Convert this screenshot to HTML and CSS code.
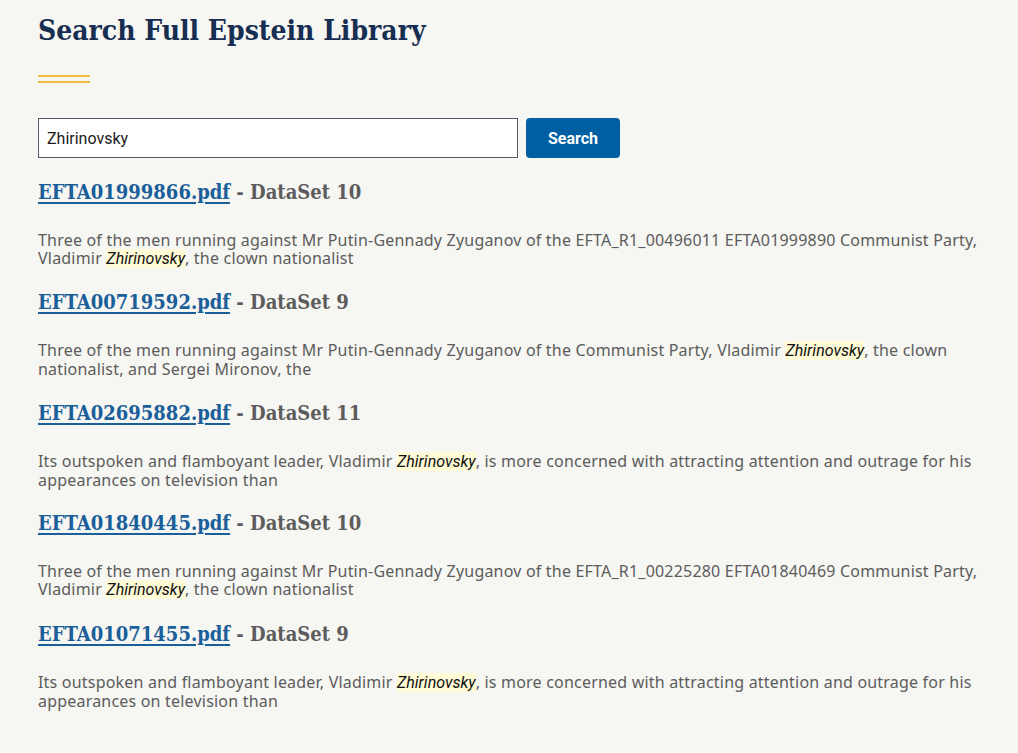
FILE: index.html
```html
<!DOCTYPE html>
<html>
<head>
<meta charset="utf-8">
<link rel="stylesheet" href="styles.css">
</head>
<body>
<main class="page">
  <h1 class="title">Search Full Epstein Library</h1>
  <div class="rule"></div>
  <form class="search">
    <input class="search-input" type="text" value="Zhirinovsky">
    <button class="search-btn" type="button">Search</button>
  </form>
  <div class="results">
    <div class="result">
      <h2 class="result-title"><a href="#">EFTA01999866.pdf</a> - DataSet 10</h2>
      <p class="snippet">Three of the men running against Mr Putin-Gennady Zyuganov of the EFTA_R1_00496011 EFTA01999890 Communist Party, Vladimir <mark>Zhirinovsky</mark>, the clown nationalist</p>
    </div>
    <div class="result">
      <h2 class="result-title"><a href="#">EFTA00719592.pdf</a> - DataSet 9</h2>
      <p class="snippet">Three of the men running against Mr Putin-Gennady Zyuganov of the Communist Party, Vladimir <mark>Zhirinovsky</mark>, the clown nationalist, and Sergei Mironov, the</p>
    </div>
    <div class="result">
      <h2 class="result-title"><a href="#">EFTA02695882.pdf</a> - DataSet 11</h2>
      <p class="snippet">Its outspoken and flamboyant leader, Vladimir <mark>Zhirinovsky</mark>, is more concerned with attracting attention and outrage for his appearances on television than</p>
    </div>
    <div class="result">
      <h2 class="result-title"><a href="#">EFTA01840445.pdf</a> - DataSet 10</h2>
      <p class="snippet">Three of the men running against Mr Putin-Gennady Zyuganov of the EFTA_R1_00225280 EFTA01840469 Communist Party, Vladimir <mark>Zhirinovsky</mark>, the clown nationalist</p>
    </div>
    <div class="result">
      <h2 class="result-title"><a href="#">EFTA01071455.pdf</a> - DataSet 9</h2>
      <p class="snippet">Its outspoken and flamboyant leader, Vladimir <mark>Zhirinovsky</mark>, is more concerned with attracting attention and outrage for his appearances on television than</p>
    </div>
  </div>
</main>
</body>
</html>
```
FILE: styles.css
```css
html, body {
  margin: 0;
  padding: 0;
  background: #f6f6f2;
}
.page {
  padding: 12px 38px 0 38px;
  max-width: 944px;
  font-family: "Noto Sans", "Liberation Sans", sans-serif;
}
.title {
  margin: 0;
  font-family: "DejaVu Serif Condensed", "DejaVu Serif", serif;
  font-stretch: condensed;
  font-weight: bold;
  font-size: 28px;
  line-height: 38px;
  color: #162e51;
}
.rule {
  margin-top: 25px;
  width: 52px;
  height: 4px;
  border-top: 2px solid #f2bb3f;
  border-bottom: 2px solid #f2bb3f;
}
.search {
  display: flex;
  gap: 8px;
  margin-top: 35px;
}
.search-input {
  width: 480px;
  height: 40px;
  box-sizing: border-box;
  border: 1px solid #565c65;
  background: #fff;
  padding: 0 8px;
  font-family: Roboto, "Liberation Sans", sans-serif;
  font-size: 16px;
  color: #1b1b1b;
}
.search-btn {
  width: 94px;
  height: 40px;
  border: none;
  border-radius: 4px;
  background: #005ea2;
  color: #fff;
  font-family: Roboto, "Liberation Sans", sans-serif;
  font-weight: bold;
  font-size: 16px;
}
.results {
  margin-top: 20px;
}
.result {
  margin-bottom: 20.4px;
}
.result-title {
  margin: 0;
  font-family: "DejaVu Serif Condensed", "DejaVu Serif", serif;
  font-stretch: condensed;
  font-size: 20px;
  line-height: 28px;
  font-weight: bold;
  color: #5c5c5c;
}
.result-title a {
  color: #1a5e9a;
  text-decoration: underline;
  text-decoration-thickness: 2px;
  text-underline-offset: 3px;
}
.snippet {
  margin: 25px 0 0 0;
  font-size: 16px;
  line-height: 18px;
  letter-spacing: 0.2px;
  color: #5c5c5c;
}
mark {
  background: #fffbd6;
  color: #111;
  font-style: italic;
  font-family: Roboto, "Liberation Sans", sans-serif;
  letter-spacing: 0;
  line-height: 18px;
}
```
